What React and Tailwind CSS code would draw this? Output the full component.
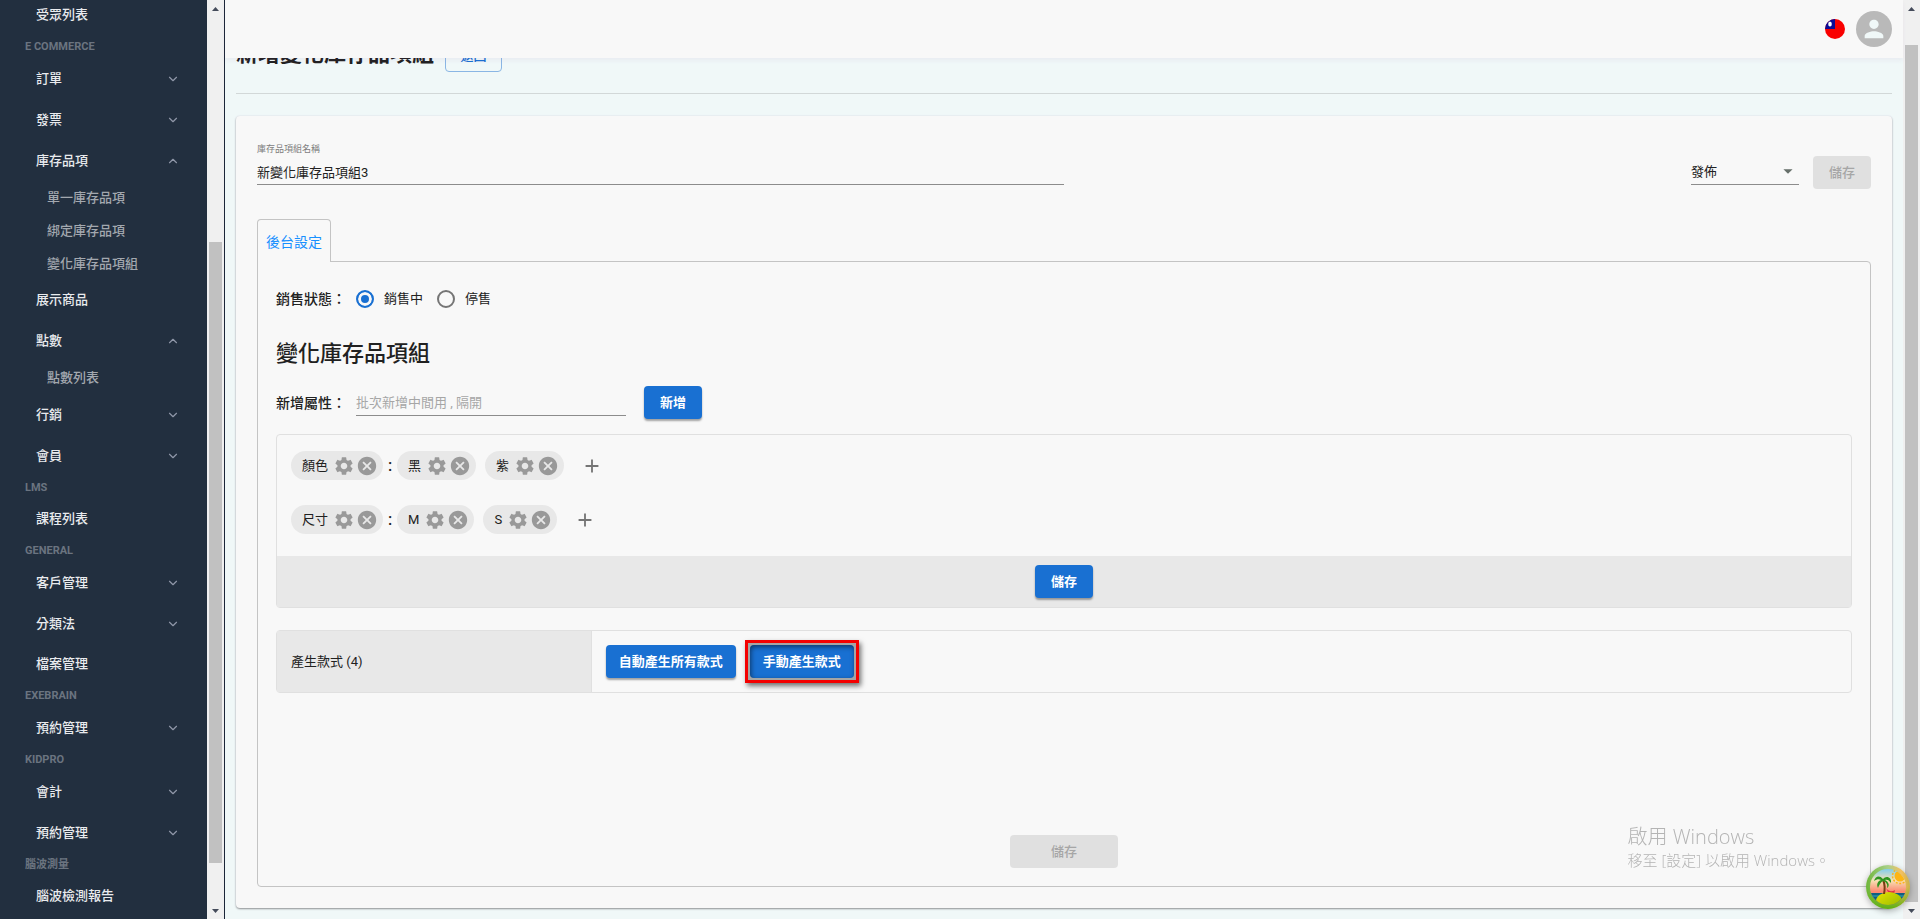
import { MdSettings, MdCancel, MdAdd, MdArrowDropDown, MdPerson } from 'react-icons/md'
import { ChevronDown, ChevronUp } from 'lucide-react'

// Menú lateral: label = título de sección, sub = entradas hijas
const MENU = [
  { texto: '受眾列表' },
  { label: 'E COMMERCE' },
  { texto: '訂單', flecha: true },
  { texto: '發票', flecha: true },
  { texto: '庫存品項', flecha: true, sub: ['單一庫存品項', '綁定庫存品項', '變化庫存品項組'] },
  { texto: '展示商品' },
  { texto: '點數', flecha: true, sub: ['點數列表'] },
  { texto: '行銷', flecha: true },
  { texto: '會員', flecha: true },
  { label: 'LMS' },
  { texto: '課程列表' },
  { label: 'GENERAL' },
  { texto: '客戶管理', flecha: true },
  { texto: '分類法', flecha: true },
  { texto: '檔案管理' },
  { label: 'EXEBRAIN' },
  { texto: '預約管理', flecha: true },
  { label: 'KIDPRO' },
  { texto: '會計', flecha: true },
  { texto: '預約管理', flecha: true },
  { label: '腦波測量' },
  { texto: '腦波檢測報告' },
]

const ATRIBUTOS = [
  { nombre: '顏色', valores: ['黑', '紫'] },
  { nombre: '尺寸', valores: ['M', 'S'] },
]

function EntradaMenu({ item }) {
  if (item.label) {
    return <h2 className="flex h-[23px] items-center pl-[25px] text-[11px] font-bold text-[#6b7480]">{item.label}</h2>
  }
  if (!item.flecha) {
    return (
      <a href="#" className="flex h-10 items-center pl-9 font-medium text-[#e9ebee]">{item.texto}</a>
    )
  }
  const Flecha = item.sub ? ChevronUp : ChevronDown
  return (
    <>
      <button type="button" className="flex h-[41px] w-full items-center justify-between pl-9 pr-[27px] font-medium text-[#e9ebee]">
        {item.texto}
        <Flecha className="size-3.5 text-[#9097a8]" strokeWidth={2} />
      </button>
      {item.sub?.map((s) => (
        <a key={s} href="#" className="flex h-[33px] items-center pl-[47px] font-medium text-[#a3a8af]">{s}</a>
      ))}
    </>
  )
}

function Barra({ children }) {
  return (
    <div className="flex h-full w-[17px] shrink-0 flex-col items-center justify-between bg-[#f0f0f0]">
      <svg className="h-[17px] w-[17px] shrink-0" viewBox="0 0 17 17"><path d="M5 11h7L8.500 7z" fill="#444b5a" /></svg>
      {children}
      <svg className="h-[17px] w-[17px] shrink-0" viewBox="0 0 17 17"><path d="M5 7h7l-3.500 4z" fill="#444b5a" /></svg>
    </div>
  )
}

function Boton({ children, sombra = 'shadow-[0_2px_2px_rgba(0,0,0,0.35)]' }) {
  return (
    <button type="button" className={`h-[33px] min-w-[58px] rounded bg-[#1970d2] px-[13px] font-bold text-white ${sombra}`}>
      {children}
    </button>
  )
}

function BotonInactivo({ className }) {
  return (
    <button type="button" disabled className={`h-[33px] rounded bg-[#e0e0e0] font-medium text-[#a6a6a6] ${className}`}>儲存</button>
  )
}

function Chip({ texto }) {
  return (
    <div className="flex h-[29px] items-center gap-px rounded-full bg-[#e8e8e8] pl-[11px] pr-[5px]">
      <span className="mr-1">{texto}</span>
      <button type="button" aria-label={`設定 ${texto}`}><MdSettings className="size-[22px] text-[#999]" /></button>
      <button type="button" aria-label={`刪除 ${texto}`}><MdCancel className="size-[22px] text-[#999]" /></button>
    </div>
  )
}

function Radio({ texto, ...props }) {
  return (
    <label className="flex items-center gap-2.5">
      <input
        type="radio"
        name="estado"
        className="size-[18px] appearance-none rounded-full border-2 border-[#757575] checked:border-[#1970d2] checked:bg-[#1970d2] checked:shadow-[inset_0_0_0_3px_#f8f8f8]"
        {...props}
      />
      {texto}
    </label>
  )
}

function Bandera() {
  return (
    <svg className="size-5" viewBox="0 0 20 20">
      <clipPath id="bandera"><circle cx="10" cy="10" r="10" /></clipPath>
      <g clipPath="url(#bandera)">
        <path d="M0 0h20v20H0z" fill="#f90000" />
        <path d="M0 0h10v10H0z" fill="#0b0b96" />
        <ellipse cx="5" cy="5" rx="1.800" ry="2.600" fill="#fff" />
      </g>
    </svg>
  )
}

function Isla() {
  return (
    <svg className="size-11" viewBox="0 0 44 44">
      <defs>
        <linearGradient id="aro" x1="0" y1="0" x2="1" y2="0">
          <stop offset="0" stopColor="#6fb63a" />
          <stop offset="0.500" stopColor="#a9d08a" />
          <stop offset="0.800" stopColor="#f4c061" />
          <stop offset="1" stopColor="#c9b04a" />
        </linearGradient>
        <linearGradient id="aroBajo" x1="0" y1="0" x2="0" y2="1">
          <stop offset="0.500" stopColor="#5fae10" stopOpacity="0" />
          <stop offset="1" stopColor="#5fae10" />
        </linearGradient>
        <linearGradient id="cielo" x1="0" y1="0" x2="0" y2="1">
          <stop offset="0.100" stopColor="#85cdea" />
          <stop offset="0.350" stopColor="#f6e2b4" />
          <stop offset="0.600" stopColor="#fb8a72" />
        </linearGradient>
        <linearGradient id="arena" x1="0" y1="0" x2="1" y2="1">
          <stop offset="0" stopColor="#e6e200" />
          <stop offset="1" stopColor="#8db600" />
        </linearGradient>
        <clipPath id="disco"><circle cx="22" cy="22" r="18" /></clipPath>
      </defs>
      <circle cx="22" cy="22" r="22" fill="url(#aro)" />
      <circle cx="22" cy="22" r="22" fill="url(#aroBajo)" />
      <g clipPath="url(#disco)">
        <path d="M0 0h44v44H0z" fill="url(#cielo)" />
        <circle cx="34" cy="11" r="7.500" fill="none" stroke="#fdb515" strokeWidth="1.500" strokeDasharray="2 1.500" />
        <circle cx="34" cy="11" r="5.500" fill="#fdb515" />
        <path d="M0 28h44v16H0z" fill="#0f5f80" />
        <path d="M0 31h44" stroke="#35a8b5" />
        <path d="M20 23c3 4 6 4 9 2l-1 4h-5z" fill="#e02f45" />
        <ellipse cx="23" cy="36" rx="13" ry="9" fill="url(#arena)" />
        <path d="M17 29c1-5 1-9-1-14l2-1c2 5 2 10 1 15z" fill="#7a3b12" />
        <path d="M17 14c-4-5-8-2-9 2 3-2 5-2 7-1-3 1-5 4-3 8 1-3 3-6 5-7 3 1 5 3 4 7 3-2 2-6-2-8 2-1 4 0 6 3 1-6-5-8-8-4z" fill="#2f9420" />
      </g>
    </svg>
  )
}

export default function App() {
  return (
    <div className="flex h-screen overflow-hidden bg-[#f0f8f8] font-[Roboto,'Noto_Sans_CJK_TC',sans-serif] text-[13px] leading-5 text-[#212121]">

      {/* Menú lateral */}
      <nav className="w-[207px] shrink-0 overflow-hidden bg-[#222f3f]">
        <div className="-mt-[5px]">
          {MENU.map((item, i) => <EntradaMenu key={i} item={item} />)}
        </div>
      </nav>
      <Barra>
        <div className="flex w-[13px] flex-1 flex-col">
          <div className="flex-[225]" />
          <div className="flex-[621] bg-[#c1c1c1]" />
          <div className="flex-[39]" />
        </div>
      </Barra>

      <div className="flex min-w-0 flex-1 flex-col border-l border-[#1b2638]">

        {/* Encabezado */}
        <header className="z-10 flex h-[58px] shrink-0 items-center justify-end gap-[11px] bg-[#f8f8f8] pr-[11px] shadow-[0_3px_4px_rgba(140,60,150,0.06)]">
          <button type="button" aria-label="語言"><Bandera /></button>
          <button type="button" aria-label="帳號" className="grid size-9 place-items-center rounded-full bg-[#b9b9b9]">
            <MdPerson className="size-7 text-[#f0f8f8]" />
          </button>
        </header>

        {/* Contenido, desplazado bajo el encabezado */}
        <main className="-mt-[19px] px-[11px]">
          <div className="flex h-[55px] items-start gap-[11px] border-b border-[#d2d8d8]">
            <h1 className="text-[22px] font-bold leading-[30px]">新增變化庫存品項組</h1>
            <button type="button" className="h-[33px] w-[57px] rounded border border-[#8ab6e4] font-medium leading-[30px] text-[#1970d2]">返回</button>
          </div>

          <section className="mt-[22px] rounded bg-[#f8f8f8] px-[21px] pb-[21px] pt-[23px] shadow-[0_1px_2px_rgba(0,0,0,0.4),0_0_2px_#e4e4f0]">

            {/* Nombre y publicación */}
            <div className="flex items-start justify-between">
              <div className="w-1/2">
                <label htmlFor="nombre" className="block text-[9px] text-[#7d7d7d]">庫存品項組名稱</label>
                <input id="nombre" defaultValue="新變化庫存品項組3" className="block h-[26px] w-full border-b border-[#8c8c8c] bg-transparent outline-none" />
              </div>
              <div className="mt-[17px] flex items-center gap-3.5">
                <div className="relative">
                  <select aria-label="狀態" className="block h-[25px] w-[108px] appearance-none border-b border-[#8c8c8c] bg-transparent">
                    <option>發佈</option>
                  </select>
                  <MdArrowDropDown className="pointer-events-none absolute right-0 top-0 size-[22px] text-[#666f6a]" />
                </div>
                <BotonInactivo className="w-[58px]" />
              </div>
            </div>

            {/* Pestaña */}
            <div className="mt-[30px] flex">
              <button type="button" className="z-10 -mb-px h-[43px] rounded-t border border-b-0 border-[#c4c4c4] bg-[#f8f8f8] px-2 pt-0.5 text-[14px] text-[#1890ff]">後台設定</button>
            </div>

            <div className="flex flex-col rounded-b rounded-tr border border-[#c4c4c4] px-[18px] pb-[18px] pt-[27px]">
              <div className="flex items-center">
                <span className="w-20 text-[14px] font-medium">銷售狀態：</span>
                <div className="flex gap-3.5">
                  <Radio texto="銷售中" defaultChecked />
                  <Radio texto="停售" />
                </div>
              </div>

              <h2 className="mt-[30px] text-[22px] font-medium leading-[30px]">變化庫存品項組</h2>

              <div className="mt-[17px] flex items-center">
                <label htmlFor="atributo" className="w-20 text-[14px] font-medium">新增屬性：</label>
                <input id="atributo" placeholder="批次新增中間用 , 隔開" className="mr-[18px] h-[27px] w-[270px] border-b border-[#8c8c8c] bg-transparent outline-none placeholder:text-[#a6a6a6]" />
                <Boton>新增</Boton>
              </div>

              {/* Atributos y valores */}
              <div className="mt-[15px] rounded border border-[#e0e0e0]">
                <div className="flex flex-col gap-[25px] px-3.5 pb-[22px] pt-4">
                  {ATRIBUTOS.map((a) => (
                    <div key={a.nombre} className="flex items-center">
                      <Chip texto={a.nombre} />
                      <span className="w-3.5 text-center text-[16px] font-medium">:</span>
                      <div className="flex items-center gap-[9px]">
                        {a.valores.map((v) => <Chip key={v} texto={v} />)}
                      </div>
                      <button type="button" aria-label="新增選項" className="ml-[17px]"><MdAdd className="size-[22px] text-[#757575]" /></button>
                    </div>
                  ))}
                </div>
                <div className="flex justify-center bg-[#e8e8e8] py-[9px]">
                  <Boton>儲存</Boton>
                </div>
              </div>

              {/* Generar variantes */}
              <div className="mt-[22px] flex h-[63px] rounded border border-[#e0e0e0]">
                <div className="flex w-1/5 items-center border-r border-[#e0e0e0] bg-[#e8e8e8] pl-3.5">產生款式 (4)</div>
                <div className="flex items-center gap-[9px] pl-3.5">
                  <Boton>自動產生所有款式</Boton>
                  <div className="border-[3px] border-[#f40000] bg-[#a5a5a5] p-0.5 shadow-[2px_3px_5px_rgba(0,0,0,0.55)]">
                    <Boton sombra="shadow-[inset_1px_2px_5px_rgba(0,0,0,0.5)]">手動產生款式</Boton>
                  </div>
                </div>
              </div>

              <BotonInactivo className="mt-[142px] w-[108px] self-center" />
            </div>
          </section>
        </main>
      </div>

      <Barra>
        <div className="flex w-[13px] flex-1 flex-col">
          <div className="flex-[28]" />
          <div className="flex-[857] bg-[#c1c1c1]" />
        </div>
      </Barra>

      {/* Marca de agua y botón flotante */}
      <div className="pointer-events-none fixed bottom-12 right-[90px] text-[#b4b4b4] font-[Open_Sans,'Noto_Sans_CJK_TC',sans-serif]">
        <p className="text-[20px] font-light leading-6">啟用 Windows</p>
        <p className="text-[15px] font-light leading-[22px]">移至 [設定] 以啟用 Windows。</p>
      </div>
      <button type="button" aria-label="小幫手" className="fixed bottom-2.5 right-2.5 rounded-full shadow-[0_2px_6px_rgba(0,0,0,0.3)]"><Isla /></button>
    </div>
  )
}
